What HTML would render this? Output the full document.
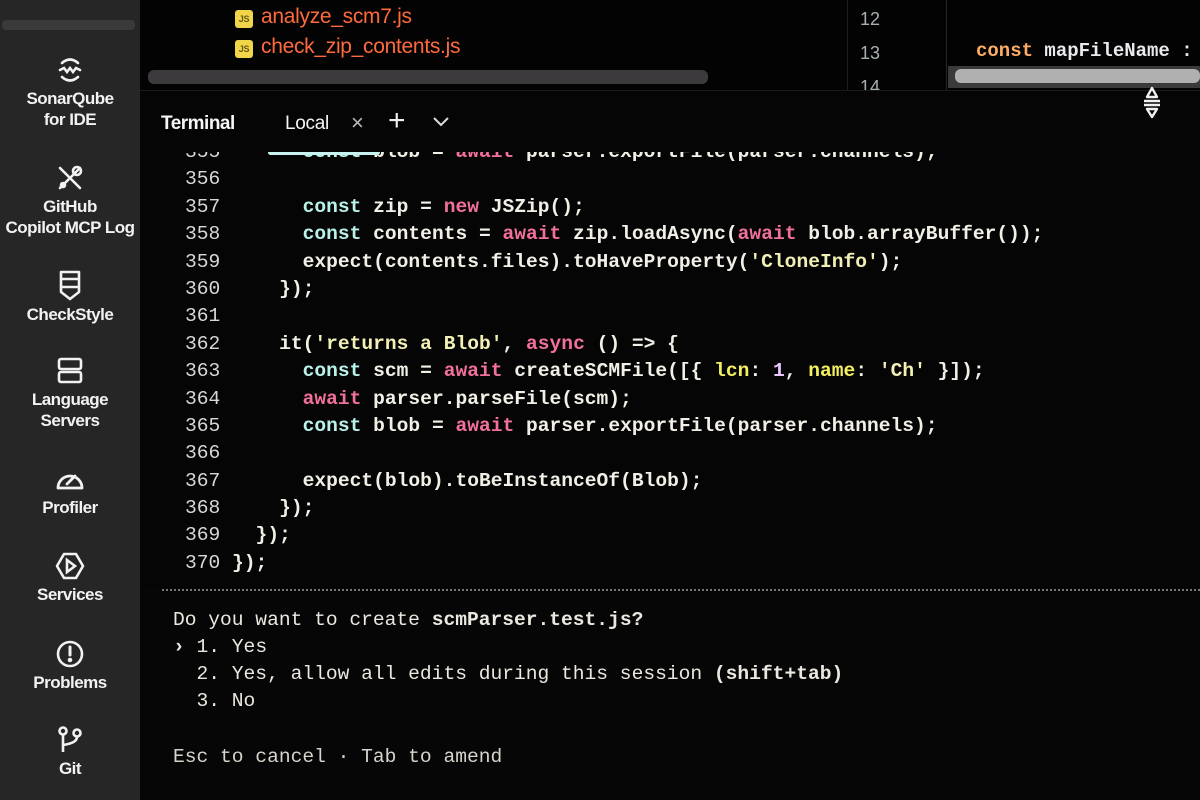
<!DOCTYPE html>
<html><head><meta charset="utf-8">
<style>
*{margin:0;padding:0;box-sizing:border-box}
html,body{width:1200px;height:800px;overflow:hidden;background:#060606}
body{position:relative;font-family:"Liberation Sans",sans-serif}
#side{position:absolute;left:0;top:0;width:140px;height:800px;background:#262626}
#side .ridge{position:absolute;left:2px;top:20px;width:133px;height:10px;background:#3a3a3a;border-radius:4px}
.it{position:absolute;left:0;width:140px;text-align:center;color:#f2f2f2;font-weight:bold;font-size:17px;line-height:21px;letter-spacing:-0.5px;margin-top:3px}
.it svg{display:block;margin:0 auto 3px}
#top{position:absolute;left:140px;top:0;width:1060px;height:90px;background:#030303}
.file{position:absolute;left:95px;font-size:21px;color:#ff6a3d;letter-spacing:-0.3px}
.js{display:inline-block;width:18px;height:18px;background:#f0d54a;color:#6a5a10;font-size:9px;line-height:18px;text-align:center;border-radius:3px;vertical-align:1px;margin-right:8px;font-weight:bold}
.sb{position:absolute;border-radius:6px}
.mono{font-family:"Liberation Mono",monospace;font-size:19.6px;font-weight:bold}
#tabs{position:absolute;left:140px;top:90px;width:1060px;height:62px;background:#050505;border-top:1px solid #1a1a1a}
#code{position:absolute;left:140px;top:152px;width:1060px;height:436px;overflow:hidden;background:#050505}
#code .in{position:absolute;left:45px;top:-13px}
.l{height:27.4px;line-height:27.4px;color:#f2f0e6;white-space:pre}
.n{color:#d8d8d8;font-weight:normal}
.k{color:#b9f2e8}.p{color:#f2709a}.s{color:#f2f0b4}.y{color:#f2f060}.v{color:#e8c8ff}
#prompt{position:absolute;left:173px;top:607px;color:#ece8e0;font-weight:normal}
#prompt div{height:27px;line-height:27px;white-space:pre}
</style></head><body>
<div id="side">
<div class="ridge"></div>
<div class="it" style="top:52px"><svg width="30" height="30" viewBox="0 0 30 30" fill="none" stroke="#f2f2f2" stroke-width="2.6" stroke-linecap="round"><path d="M7 8 Q15 1 23 8"/><path d="M5 15 L9 13 L12 17 L15 13 L18 17 L21 13 L25 15"/><path d="M7 22 Q15 29 23 22"/></svg>SonarQube<br>for IDE</div>
<div class="it" style="top:160px"><svg width="30" height="30" viewBox="0 0 30 30" fill="none" stroke="#f2f2f2" stroke-width="2.6" stroke-linecap="round"><path d="M5 5 L25 25"/><path d="M25 5 L5 25"/><circle cx="22" cy="8" r="4"/><circle cx="8" cy="22" r="2"/></svg>GitHub<br>Copilot MCP Log</div>
<div class="it" style="top:266px"><svg width="30" height="32" viewBox="0 0 30 32" fill="none" stroke="#f2f2f2" stroke-width="2.6" stroke-linejoin="round"><path d="M6 3 H24 V23 L15 30 L6 23 Z"/><path d="M6 10 H24 M6 18 H24"/></svg>CheckStyle</div>
<div class="it" style="top:353px"><svg width="30" height="30" viewBox="0 0 30 30" fill="none" stroke="#f2f2f2" stroke-width="2.6"><rect x="4" y="3" width="22" height="10" rx="2"/><rect x="4" y="16" width="22" height="10" rx="2"/></svg>Language<br>Servers</div>
<div class="it" style="top:461px"><svg width="32" height="30" viewBox="0 0 32 30" fill="none" stroke="#f2f2f2" stroke-width="2.8"><path d="M4 24 A12 12 0 1 1 28 24 Z" stroke-linejoin="round"/><path d="M13 20 L21 12" stroke-linecap="round"/></svg>Profiler</div>
<div class="it" style="top:548px"><svg width="30" height="30" viewBox="0 0 30 30" fill="none" stroke="#f2f2f2" stroke-width="2.6"><path d="M9 3 H21 L28 15 L21 27 H9 L2 15 Z" stroke-linejoin="round"/><path d="M12 9 L20 15 L12 21 Z"/></svg>Services</div>
<div class="it" style="top:636px"><svg width="30" height="30" viewBox="0 0 30 30" fill="none" stroke="#f2f2f2" stroke-width="2.6"><circle cx="15" cy="15" r="12"/><path d="M15 8 V16" stroke-linecap="round" stroke-width="3"/><circle cx="15" cy="21" r="1" fill="#f2f2f2"/></svg>Problems</div>
<div class="it" style="top:722px"><svg width="30" height="30" viewBox="0 0 30 30" fill="none" stroke="#f2f2f2" stroke-width="2.6"><circle cx="8" cy="6" r="3.5"/><circle cx="22" cy="8" r="3.5"/><path d="M8 10 V27 M22 12 Q22 18 8 20"/></svg>Git</div>
</div>
<div id="top">
<div class="file" style="top:5px"><span class="js">JS</span>analyze_scm7.js</div>
<div class="file" style="top:35px"><span class="js">JS</span>check_zip_contents.js</div>
<div class="sb" style="left:8px;top:70px;width:560px;height:14px;background:#3c3a3c"></div>
<div style="position:absolute;left:707px;top:0;width:1px;height:90px;background:#1e1e1e"></div>
<div style="position:absolute;left:806px;top:0;width:1px;height:90px;background:#1e2a26"></div>
<div style="position:absolute;left:720px;top:8px;color:#a8b0b4;font-size:18px;line-height:22px">12</div>
<div style="position:absolute;left:720px;top:42px;color:#a8b0b4;font-size:18px;line-height:22px">13</div>
<div style="position:absolute;left:720px;top:76px;color:#a8b0b4;font-size:18px;line-height:22px;height:14px;overflow:hidden">14</div>
<div class="mono" style="position:absolute;left:836px;top:40px;font-size:19px;color:#e8e8ee;white-space:pre"><span style="color:#ffad66">const</span> mapFileName :</div>
<div style="position:absolute;left:808px;top:66px;width:252px;height:22px;background:#3a3a3a"></div>
<div class="sb" style="left:815px;top:69px;width:245px;height:14px;background:#b0b0b0"></div>
</div>
<div id="tabs">
<div style="position:absolute;left:21px;top:22px;color:#f6f6f6;font-weight:bold;font-size:19px;letter-spacing:-0.5px">Terminal</div>
<div style="position:absolute;left:145px;top:22px;color:#f6f6f6;font-size:19px;letter-spacing:-0.3px">Local</div>
<div style="position:absolute;left:211px;top:19px;color:#bbb;font-size:22px">×</div>
<div style="position:absolute;left:248px;top:13px;color:#eee;font-size:30px;font-weight:300">+</div>
<svg style="position:absolute;left:292px;top:25px" width="18" height="12" viewBox="0 0 18 12"><path d="M2 2 L9 9 L16 2" fill="none" stroke="#ddd" stroke-width="2"/></svg>
<svg style="position:absolute;left:1000px;top:-6px" width="24" height="34" viewBox="0 0 24 34" fill="none" stroke="#f0f0f0" stroke-width="2.4" stroke-linejoin="round"><path d="M12 3 L17 12 H7 Z"/><path d="M4 16 H20 M4 20 H20"/><path d="M12 32 L17 24 H7 Z"/></svg>
</div>
<div id="code"><div class="in mono"><div class="l"><span class="n">355</span>       <span class="k">const</span> blob = <span class="p">await</span> parser.exportFile(parser.channels);</div><div class="l"><span class="n">356</span></div><div class="l"><span class="n">357</span>       <span class="k">const</span> zip = <span class="p">new</span> JSZip();</div><div class="l"><span class="n">358</span>       <span class="k">const</span> contents = <span class="p">await</span> zip.loadAsync(<span class="p">await</span> blob.arrayBuffer());</div><div class="l"><span class="n">359</span>       expect(contents.files).toHaveProperty(<span class="s">'CloneInfo'</span>);</div><div class="l"><span class="n">360</span>     });</div><div class="l"><span class="n">361</span></div><div class="l"><span class="n">362</span>     it(<span class="s">'returns a Blob'</span>, <span class="p">async</span> () =&gt; {</div><div class="l"><span class="n">363</span>       <span class="k">const</span> scm = <span class="p">await</span> createSCMFile([{ <span class="y">lcn</span>: <span class="v">1</span>, <span class="y">name</span>: <span class="s">'Ch'</span> }]);</div><div class="l"><span class="n">364</span>       <span class="p">await</span> parser.parseFile(scm);</div><div class="l"><span class="n">365</span>       <span class="k">const</span> blob = <span class="p">await</span> parser.exportFile(parser.channels);</div><div class="l"><span class="n">366</span></div><div class="l"><span class="n">367</span>       expect(blob).toBeInstanceOf(Blob);</div><div class="l"><span class="n">368</span>     });</div><div class="l"><span class="n">369</span>   });</div><div class="l"><span class="n">370</span> });</div></div>
<div style="position:absolute;left:128px;top:-2px;width:112px;height:5px;background:#c8f2ee;border-radius:3px"></div>
</div>
<div style="position:absolute;left:162px;top:589px;width:1038px;border-top:2px dotted #777"></div>
<div id="prompt" class="mono"><div>Do you want to create <b>scmParser.test.js?</b></div><div><b>›</b> 1. Yes</div><div>  2. Yes, allow all edits during this session <b>(shift+tab)</b></div><div>  3. No</div><div> </div><div style="margin-top:2px;color:#d8d4cc">Esc to cancel · Tab to amend</div></div>
</body></html>
